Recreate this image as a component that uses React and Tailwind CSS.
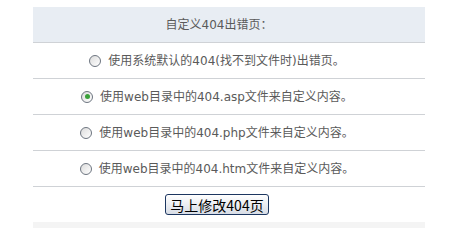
import React, { useState } from 'react';

const options = [
  { id: 'sys', label: '使用系统默认的404(找不到文件时)出错页。' },
  { id: 'asp', label: '使用web目录中的404.asp文件来自定义内容。' },
  { id: 'php', label: '使用web目录中的404.php文件来自定义内容。' },
  { id: 'htm', label: '使用web目录中的404.htm文件来自定义内容。' },
];

function Radio({ checked }) {
  return (
    <span className="w-[12px] h-[12px] rounded-full border border-[#6d7580] bg-gradient-to-br from-[#dcdcdc] to-white flex items-center justify-center shrink-0">
      {checked && <span className="w-[5px] h-[5px] rounded-full bg-[#3aa13a]" />}
    </span>
  );
}

export default function App() {
  const [value, setValue] = useState('asp');

  return (
    <div className="w-[459px] h-[228px] bg-white pt-[7px] text-[12px] text-[#5a5a5a]" style={{ fontFamily: '"DejaVu Sans", "Noto Sans CJK SC", sans-serif' }}>
      <div className="mx-[33px] w-[392px]">
        <div className="h-[36px] bg-[#e8edf3] border-b border-[#cfd2d6] flex items-center justify-center pr-[20px]">
          自定义404出错页：
        </div>
        {options.map(o => (
          <div key={o.id} className="h-[36px] border-b border-[#cfd2d6] flex items-center justify-center pr-[24px]">
            <label className="flex items-center gap-[7px] cursor-pointer" onClick={() => setValue(o.id)}>
              <Radio checked={value === o.id} />
              <span>{o.label}</span>
            </label>
          </div>
        ))}
        <div className="h-[35px] flex items-center justify-center pr-[24px]">
          <button className="w-[104px] h-[21px] rounded-[3px] border border-[#1c3660] bg-gradient-to-b from-white to-[#d8dde6] text-black text-[14px] leading-none" style={{ fontFamily: '"Noto Sans CJK SC", serif' }}>
            马上修改404页
          </button>
        </div>
        <div className="h-[6px] bg-[#f4f4f4]" />
      </div>
    </div>
  );
}
